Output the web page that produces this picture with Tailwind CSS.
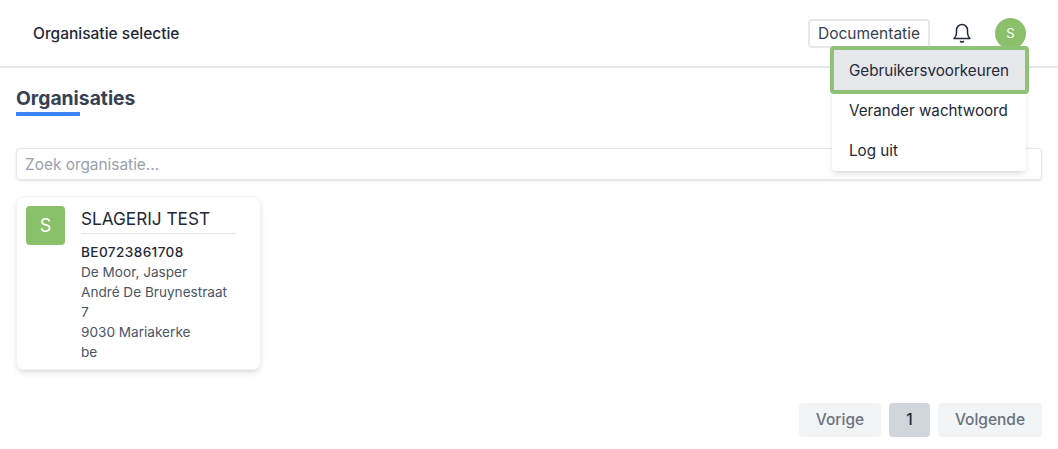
<!DOCTYPE html>
<html lang="en">
<head>
    <meta charset="UTF-8">
    <title>Organisatie selectie</title>
    <script src="https://cdn.jsdelivr.net/npm/@tailwindcss/browser@4"></script>
</head>
<body class="bg-white font-['Inter',sans-serif] text-gray-800 h-[449px] overflow-hidden">
    <!-- Header -->
    <header class="relative h-[68px] border-b-2 border-gray-200 flex items-center pl-[33px] pr-[32px]">
        <h1 class="text-[15.5px] font-medium text-gray-800 grow pt-[2px]">Organisatie selectie</h1>
        <button class="h-[29px] w-[122px] border-2 border-gray-200 rounded text-[15.5px] text-gray-700 flex items-center justify-center pt-[2px]">Documentatie</button>
        <svg class="w-6 h-6 ml-5 -mt-[2px] text-gray-800" fill="none" stroke="currentColor" stroke-width="1.5" viewBox="0 0 24 24">
            <path stroke-linecap="round" stroke-linejoin="round" d="M4 18.500h16c-1.600-1.700-2.500-3.200-2.500-5.500V10a5.500 5.500 0 0 0-11 0v3c0 2.300-.9 3.800-2.500 5.500Z"/>
            <path stroke-linecap="round" d="M10.500 21.500c.8.500 2.200.500 3 0"/>
        </svg>
        <div class="w-[31px] h-[31px] ml-[21px] rounded-full bg-[#8bc06a] text-white text-[13px] flex items-center justify-center pt-[1px]">S</div>

        <!-- User menu -->
        <div class="absolute z-10 left-[832px] top-[48px] w-[194px] h-[123px] bg-white rounded shadow-md text-[15.2px] text-gray-800">
            <div class="absolute -left-[2px] -top-[2px] w-[199px] h-[48px] bg-gray-200 border-[4px] border-[#8fc177] rounded-sm flex items-center pl-[15px] pt-[3px]">Gebruikersvoorkeuren</div>
            <div class="pt-[43px]">
                <div class="h-[40px] flex items-center pl-[17px]">Verander wachtwoord</div>
                <div class="h-[40px] flex items-center pl-[17px]">Log uit</div>
            </div>
        </div>
    </header>

    <main class="px-4">
        <div class="h-[47px] pt-[19px]">
            <h2 class="inline-block text-[19.3px] font-bold text-gray-700 leading-[22px]">Organisaties</h2>
            <div class="w-16 h-1 bg-[#3b82f6] mt-[1px]"></div>
        </div>

        <input type="text" placeholder="Zoek organisatie..." class="block w-full h-8 mt-[33px] px-2 text-[15.4px] border border-gray-200 rounded shadow-sm placeholder:text-gray-400">

        <!-- Organisation card -->
        <div class="w-[245px] h-[174px] mt-4 border border-gray-100 rounded-lg shadow-md flex pt-[9px] pl-[9px]">
            <div class="w-[39px] h-[39px] rounded bg-[#8bc06a] text-white text-lg flex items-center justify-center shrink-0">S</div>
            <div class="ml-[16px] w-[155px]">
                <div class="text-[17.2px] text-gray-800 leading-[25px] pb-[2px] border-b border-gray-200 mb-2">SLAGERIJ TEST</div>
                <div class="text-[13.6px] leading-5 text-gray-600">
                    <div class="font-medium text-gray-800 tracking-[0.4px]">BE0723861708</div>
                    <div>De Moor, Jasper</div>
                    <div>André De Bruynestraat 7</div>
                    <div>9030 Mariakerke</div>
                    <div>be</div>
                </div>
            </div>
        </div>

        <!-- Pagination -->
        <div class="flex justify-end gap-2 mt-[33px] text-[15.5px] font-medium">
            <button class="w-[82px] h-[34px] rounded bg-gray-100 text-gray-500">Vorige</button>
            <button class="w-[41px] h-[34px] rounded bg-gray-300 text-gray-800">1</button>
            <button class="w-[104px] h-[34px] rounded bg-gray-100 text-gray-500">Volgende</button>
        </div>
    </main>
</body>
</html>
